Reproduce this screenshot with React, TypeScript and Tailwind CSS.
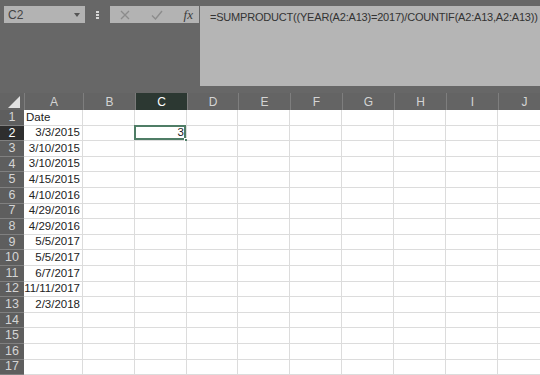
const cols = [
  { label: "A", w: "w-[59px]" },
  { label: "B", w: "w-[52px]" },
  { label: "C", w: "w-[52px]" },
  { label: "D", w: "w-[51px]" },
  { label: "E", w: "w-[52px]" },
  { label: "F", w: "w-[52px]" },
  { label: "G", w: "w-[52px]" },
  { label: "H", w: "w-[52px]" },
  { label: "I", w: "w-[52px]" },
  { label: "J", w: "w-[52px]" },
];

const dates = [
  "3/3/2015",
  "3/10/2015",
  "3/10/2015",
  "4/15/2015",
  "4/10/2016",
  "4/29/2016",
  "4/29/2016",
  "5/5/2017",
  "5/5/2017",
  "6/7/2017",
  "11/11/2017",
  "2/3/2018",
];

const rows = Array.from({ length: 17 }, (_, i) => i + 1);

export default function App() {
  return (
    <div
      className="w-[540px] h-[375px] overflow-hidden bg-white"
      style={{ fontFamily: '"Liberation Sans", Arial, sans-serif' }}
    >
      {/* top bar */}
      <div className="h-[93px] bg-[#676767] flex items-start pt-[6px] pl-[4px]">
        <div className="w-[81px] shrink-0 h-[17px] bg-[#b3b3b3] flex items-center justify-between pl-[4px] pr-[5px] text-[12px] text-[#444]">
          <span>C2</span>
          <svg width="6" height="4" viewBox="0 0 6 4">
            <path d="M0 0h6L3 4z" fill="#555" />
          </svg>
        </div>
        <div className="w-[25px] shrink-0 h-[17px] flex flex-col items-center justify-center gap-[1px]">
          <div className="w-[3px] h-[2px] bg-[#d8d8d8]" />
          <div className="w-[3px] h-[2px] bg-[#d8d8d8]" />
          <div className="w-[3px] h-[2px] bg-[#d8d8d8]" />
        </div>
        <div className="w-[89px] shrink-0 h-[17px] bg-[#b3b3b3] flex items-center pl-[10px] pr-[6px] justify-between">
          <svg width="10" height="10" viewBox="0 0 10 10">
            <path d="M1 1l8 8M9 1L1 9" stroke="#8c8c8c" strokeWidth="1.3" />
          </svg>
          <svg width="12" height="10" viewBox="0 0 12 10">
            <path d="M1 5.5l3.5 3.5L11 1" stroke="#8c8c8c" strokeWidth="1.4" fill="none" />
          </svg>
          <span
            className="text-[13px] italic text-[#3c3c3c] leading-none"
            style={{ fontFamily: '"Liberation Serif", serif' }}
          >
            fx
          </span>
        </div>
        <div className="ml-[1px] flex-1 min-w-0 overflow-hidden h-[80px] bg-[#b5b5b5] pl-[10px] pt-[3px] text-[11px] tracking-[-0.2px] text-[#333] whitespace-nowrap">
          =SUMPRODUCT((YEAR(A2:A13)=2017)/COUNTIF(A2:A13,A2:A13))
        </div>
      </div>

      {/* column headers */}
      <div className="flex h-[17px] bg-[#646464]">
        <div className="w-[24px] shrink-0 flex items-end justify-end pr-[4px] pb-[2px]">
          <svg width="12" height="12" viewBox="0 0 12 12">
            <path d="M12 0v12H0z" fill="#e2e2e2" />
          </svg>
        </div>
        {cols.map((c) => (
          <div
            key={c.label}
            className={`${c.w} shrink-0 flex items-center justify-center text-[12px] border-l ${
              c.label === "C"
                ? "bg-[#2c3832] text-white border-[#7a7a7a]"
                : "text-[#d4d4d4] border-[#7e7e7e]"
            }`}
          >
            {c.label}
          </div>
        ))}
      </div>

      {/* rows */}
      {rows.map((r) => (
        <div key={r} className="flex h-[15.6px]">
          <div
            className={`w-[24px] shrink-0 flex items-center justify-center text-[12.5px] border-b border-[#808080] ${
              r === 2 ? "bg-[#2e2e2e] text-white" : "bg-[#5e5e5e] text-[#d4d4d4]"
            }`}
          >
            {r}
          </div>
          {cols.map((c, ci) => {
            let content: string | null = null;
            let align = "justify-end";
            if (ci === 0 && r === 1) {
              content = "Date";
              align = "justify-start";
            } else if (ci === 0 && r >= 2 && r <= 13) {
              content = dates[r - 2];
            } else if (ci === 2 && r === 2) {
              content = "3";
            }
            const selected = ci === 2 && r === 2;
            return (
              <div
                key={c.label}
                className={`${c.w} shrink-0 relative flex items-center ${align} px-[2px] text-[11.5px] text-[#222] border-r border-b border-[#dcdcdc]`}
              >
                {content}
                {selected && (
                  <>
                    <div className="absolute -left-[1px] -top-[1px] right-0 bottom-0 border-[2px] border-[#4f7d66]" />
                    <div className="absolute -right-[2px] -bottom-[2px] w-[4px] h-[4px] bg-[#4f7d66] border border-white" />
                  </>
                )}
              </div>
            );
          })}
        </div>
      ))}
    </div>
  );
}
